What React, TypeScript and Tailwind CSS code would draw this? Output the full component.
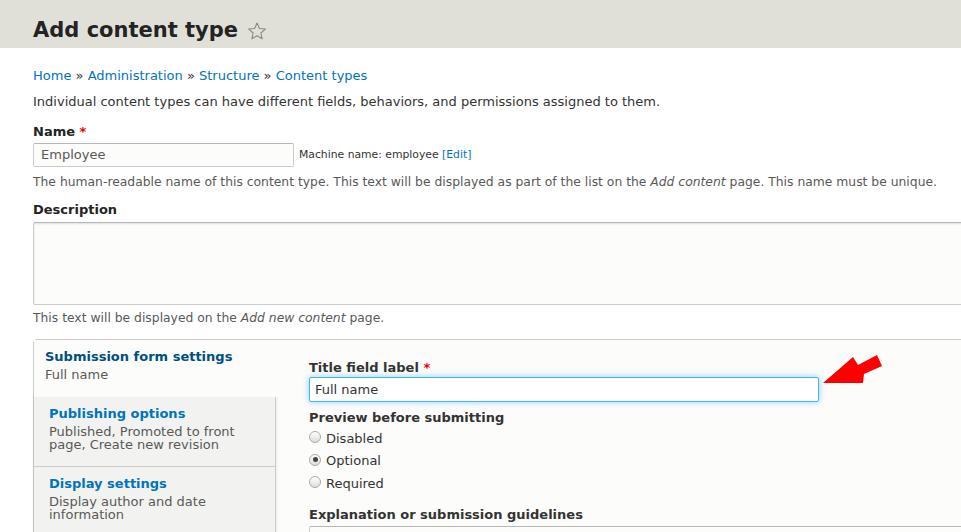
import { ReactNode } from "react";

const Radio = ({ checked, children }: { checked?: boolean; children: ReactNode }) => (
  <label className="flex items-center h-[22.5px] text-[13px] text-[#333]">
    <span className="mr-[5px] mt-[-2px] w-[12px] h-[12px] rounded-full border border-[#aaa] bg-[linear-gradient(#fff,#ddd)] flex items-center justify-center">
      {checked && <span className="w-[5px] h-[5px] rounded-full bg-[#444]" />}
    </span>
    {children}
  </label>
);

const TabItem = ({
  title,
  summary,
  selected,
}: {
  title: string;
  summary: ReactNode;
  selected?: boolean;
}) =>
  selected ? (
    <div className="bg-[#fcfcfa] h-[57px] pl-[11px] pt-[8px] mr-[-2px] relative z-10">
      <div className="text-[13px] leading-[18px] font-bold text-[#004f80]">{title}</div>
      <div className="text-[13px] leading-[18px] text-[#595959]">{summary}</div>
    </div>
  ) : (
    <div className="bg-[#f2f2f0] border-r border-b border-[#ccc] h-[70px] pl-[15px] pt-[8px] pr-[12px]">
      <div className="text-[13px] leading-[18px] font-bold text-[#0074bd]">{title}</div>
      <div className="text-[13px] leading-[13px] mt-[2px] text-[#595959]">{summary}</div>
    </div>
  );

const App = () => {
  return (
    <div
      className="h-[532px] w-full overflow-hidden bg-white text-[#333]"
      style={{ fontFamily: '"DejaVu Sans", Verdana, sans-serif' }}
    >
      <header className="bg-[#e0e0d8] h-[48px] px-[33px] pt-[12px] flex items-center">
        <h1 className="text-[21px] font-bold text-[#232323] leading-none">Add content type</h1>
        <svg className="ml-[9px] mt-[1px]" width="20" height="20" viewBox="0 0 24 24">
          <path
            d="M12 2.5l2.9 6.6 7.1.6-5.4 4.7 1.6 7-6.2-3.7-6.2 3.7 1.6-7L2 9.7l7.1-.6z"
            fill="none"
            stroke="#8a8a7a"
            strokeWidth="1.3"
            strokeLinejoin="round"
          />
        </svg>
      </header>

      <main className="pl-[33px] w-[1120px] text-[13px]">
        <nav className="mt-[19px] leading-[18px] text-[#0074bd]">
          Home <span className="text-[#333]">»</span> Administration <span className="text-[#333]">»</span>{" "}
          Structure <span className="text-[#333]">»</span> Content types
        </nav>
        <p className="mt-[8px] leading-[18px]">
          Individual content types can have different fields, behaviors, and permissions assigned to them.
        </p>

        <div className="mt-[12px] leading-[18px] font-bold text-[#232323]">
          Name <span className="text-[#e00]">*</span>
        </div>
        <div className="mt-[2px] flex items-center">
          <div className="w-[261px] h-[24px] border border-[#ccc] border-t-[#b8b8b8] rounded-[2px] bg-[#fcfcfa] px-[7px] flex items-center text-[#595959]">
            Employee
          </div>
          <span className="ml-[5px] text-[10.8px] text-[#333]">
            Machine name: employee <span className="text-[#0074bd]">[Edit]</span>
          </span>
        </div>
        <p className="mt-[6px] leading-[18px] text-[12.35px] text-[#595959]">
          The human-readable name of this content type. This text will be displayed as part of the list on the{" "}
          <em>Add content</em> page. This name must be unique.
        </p>

        <div className="mt-[10px] leading-[18px] font-bold text-[#232323]">Description</div>
        <div className="mt-[3px] h-[83px] border border-[#ccc] border-t-[#b8b8b8] rounded-[2px] bg-[#fcfcfa] shadow-[inset_0_1px_2px_rgba(0,0,0,0.12)]" />
        <p className="mt-[4px] leading-[18px] text-[12.35px] text-[#595959]">
          This text will be displayed on the <em>Add new content</em> page.
        </p>

        <div className="mt-[12px] flex border border-[#ccc] rounded-tl-[4px] bg-[#fcfcfa] h-[220px]">
          <div className="w-[242px] shrink-0 flex flex-col">
            <TabItem selected title="Submission form settings" summary="Full name" />
            <div className="shadow-[0_-2px_3px_rgba(0,0,0,0.12)]">
              <TabItem title="Publishing options" summary="Published, Promoted to front page, Create new revision" />
              <TabItem title="Display settings" summary="Display author and date information" />
            </div>
          </div>

          <div className="pl-[33px] pt-[19px] flex-1">
            <div className="leading-[18px] font-bold text-[#333]">
              Title field label <span className="text-[#e00]">*</span>
            </div>
            <div className="relative w-[510px]">
              <div className="h-[25px] border border-[#40b6ff] rounded-[2px] bg-white px-[5px] flex items-center shadow-[0_0_6px_rgba(64,182,255,0.6)]">
                Full name
              </div>
              <svg className="absolute left-[511px] top-[-25px]" width="66" height="36" viewBox="0 0 66 36">
                <polygon points="3,31 33,5 38,13 57,3 62,14 44,22 43,31" fill="#f00" />
              </svg>
            </div>

            <div className="mt-[7px] leading-[18px] font-bold text-[#333]">Preview before submitting</div>
            <div className="flex flex-col">
              <Radio>Disabled</Radio>
              <Radio checked>Optional</Radio>
              <Radio>Required</Radio>
            </div>

            <div className="mt-[11px] leading-[18px] font-bold text-[#333]">Explanation or submission guidelines</div>
            <div className="mt-[2px] h-[40px] border border-[#ccc] border-t-[#b8b8b8] rounded-[2px] bg-[#fcfcfa]" />
          </div>
        </div>
      </main>
    </div>
  );
};

export default App;
